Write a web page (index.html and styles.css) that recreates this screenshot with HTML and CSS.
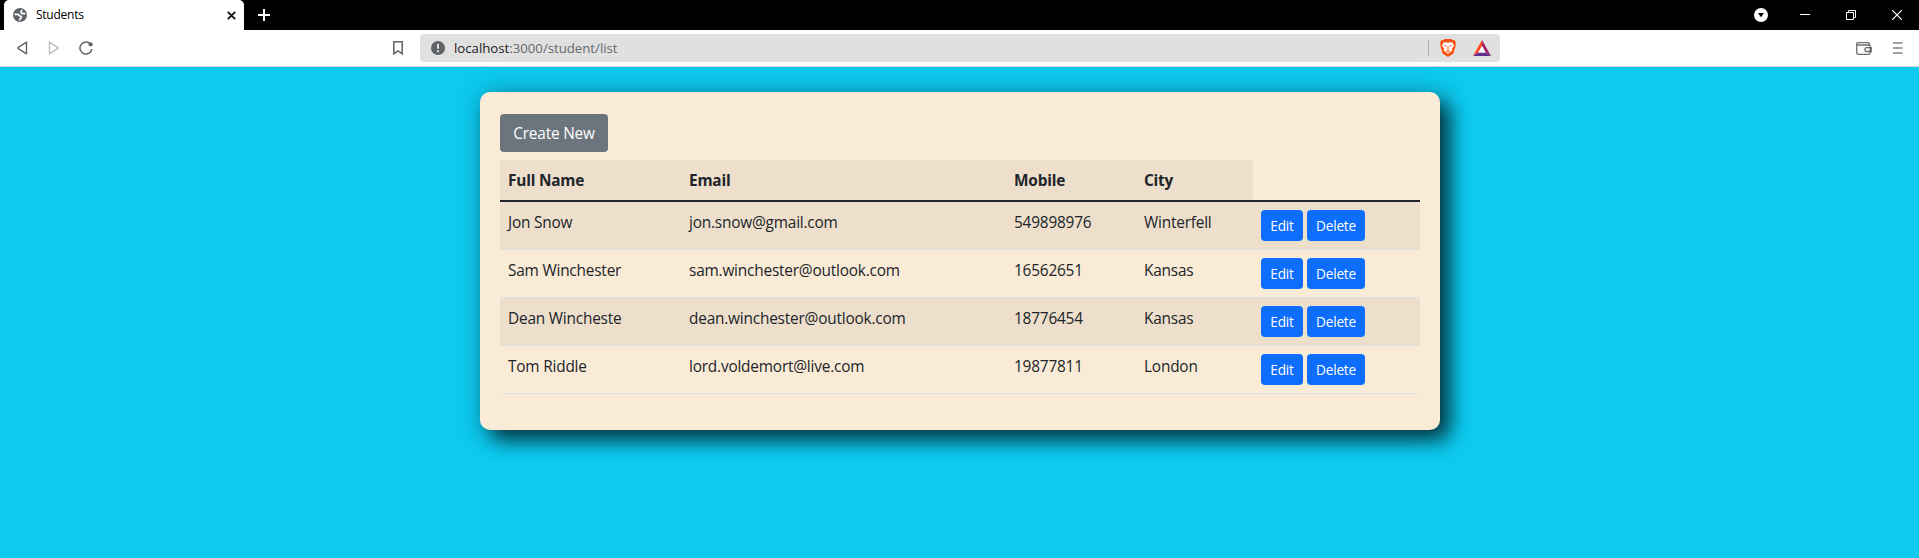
FILE: index.html
```html
<!DOCTYPE html>
<html lang="en">
<head>
<meta charset="utf-8">
<title>Students</title>
<link rel="stylesheet" href="styles.css">
</head>
<body>
<header class="browser">
  <div class="tabbar">
    <div class="tab">
      <svg class="tab-icon" width="14" height="14" viewBox="0 0 14 14"><circle cx="7" cy="7" r="7" fill="#5f6368"/><path d="M12.300 5.600H10c-1.200 0-1.900-.6-1.900-1.500S8.600 2.900 9 1.800M1.500 6.300h3.300c1.300 0 1.400 1.900 2.600 1.900 1.400 0 1.400 1.800.2 2.200-.9.300-.9 1-.9 2" fill="none" stroke="#fff" stroke-width="1.700"/></svg>
      <span class="tab-title">Students</span>
      <svg class="tab-close" width="9" height="9" viewBox="0 0 9 9"><path d="M.8.8l7.400 7.400M8.200.8L.8 8.200" stroke="#111" stroke-width="1.800"/></svg>
    </div>
    <svg class="new-tab" width="12" height="12" viewBox="0 0 12 12"><path d="M6 0v12M0 6h12" stroke="#fff" stroke-width="2"/></svg>
    <div class="window-controls">
      <svg width="14" height="14" viewBox="0 0 14 14"><circle cx="7" cy="7" r="7" fill="#fff"/><path d="M4 5h6L7 9.300z" fill="#000"/></svg>
      <svg width="10" height="10" viewBox="0 0 10 10"><path d="M0 4.500h10" stroke="#fff"/></svg>
      <svg width="10" height="10" viewBox="0 0 10 10"><path d="M.5 2.500h7v7h-7zM2.500 2.500v-2h7v7h-2" fill="none" stroke="#fff"/></svg>
      <svg width="10" height="10" viewBox="0 0 10 10"><path d="M0 0l10 10M10 0L0 10" stroke="#fff" stroke-width="1.200"/></svg>
    </div>
  </div>
  <div class="toolbar">
    <div class="nav">
      <svg width="12" height="14" viewBox="0 0 12 14"><path d="M9.500 1.200v11.600L1.300 7.600a.7.7 0 0 1 0-1.200z" fill="none" stroke="#5f6368" stroke-width="1.400" stroke-linejoin="round"/></svg>
      <svg width="12" height="14" viewBox="0 0 12 14"><path d="M1.500 1.200v11.600l8.200-5.200a.7.7 0 0 0 0-1.200z" fill="none" stroke="#b8babc" stroke-width="1.400" stroke-linejoin="round"/></svg>
      <svg width="14" height="14" viewBox="0 0 14 14"><path d="M10.600 2.300A6 6 0 1 0 12.900 8" fill="none" stroke="#5f6368" stroke-width="1.500"/><circle cx="11.600" cy="3.300" r="2.100" fill="#5f6368"/></svg>
    </div>
    <svg class="bookmark" width="10" height="14" viewBox="0 0 10 14"><path d="M.8.8h8.400v12L5 9.800l-4.200 3z" fill="none" stroke="#5f6368" stroke-width="1.500"/></svg>
    <div class="address">
      <svg width="14" height="14" viewBox="0 0 14 14"><circle cx="7" cy="7" r="7" fill="#5f6368"/><path d="M7 2.800v5M7 9.300v2" stroke="#e0e0e0" stroke-width="2"/></svg>
      <span class="url"><span class="host">localhost</span>:3000/student/list</span>
      <span class="divider"></span>
      <svg class="brave" width="16" height="18" viewBox="0 0 16 18"><path d="M4.500 0h7l1.300 1.300L14.600 1 16 4l-.6 1.500.3.900-2.200 8L8 18l-5.500-3.600L.3 6.400l.3-.9L0 4l1.400-3 1.800.3z" fill="#fb5412"/><path d="M3 4l2.400-.8L8 3.700l2.600-.5L13 4l1 2.700-2 2.700.3 2.100L10 13l-2 2-2-2-2.300-1.500L4 9.400 2 6.700z" fill="#fff"/><path d="M4.300 6.400l2.300.7M11.700 6.400l-2.300.7M8 7v3M6.300 10.500L8 11.500l1.700-1M6.300 13L8 12l1.700 1" fill="none" stroke="#fb5412" stroke-width=".9"/></svg>
      <svg class="bat" width="18" height="16" viewBox="0 0 18 16"><path d="M9 0L0 16l5.300-3.400L9 6z" fill="#ff4724"/><path d="M9 0l9 16-5.300-3.400L9 6z" fill="#9e1f63"/><path d="M0 16h18l-5.300-3.400H5.300z" fill="#662d91"/><path d="M9 6l3.700 6.600H5.300z" fill="#fff"/></svg>
    </div>
    <div class="toolbar-end">
      <svg width="16" height="13" viewBox="0 0 16 13"><path d="M13.300 4V1.700a1 1 0 0 0-1-1H1.700a1 1 0 0 0-1 1v9a1.600 1.600 0 0 0 1.600 1.600h10.300a1.600 1.600 0 0 0 1.600-1.600V4.300a1.300 1.300 0 0 0-1.300-1.300H.7M15.300 5.700h-4.500a1.900 1.900 0 0 0 0 3.800h4.500z" fill="none" stroke="#6b6e72" stroke-width="1.300"/></svg>
      <svg width="10" height="12" viewBox="0 0 10 12"><path d="M0 1h9.500M0 6h9.500M0 11h9.500" stroke="#808285" stroke-width="1.700"/></svg>
    </div>
  </div>
</header>
<main class="card">
  <a class="btn btn-create">Create New</a>
  <table class="students">
    <colgroup><col class="c-name"><col class="c-email"><col class="c-mobile"><col class="c-city"><col></colgroup>
    <thead><tr><th>Full Name</th><th>Email</th><th>Mobile</th><th>City</th><td class="blank"></td></tr></thead>
    <tbody>
      <tr><td>Jon Snow</td><td>jon.snow@gmail.com</td><td>549898976</td><td>Winterfell</td><td class="action-cell"><div class="actions"><a class="btn btn-sm edit">Edit</a><a class="btn btn-sm delete">Delete</a></div></td></tr>
      <tr><td>Sam Winchester</td><td>sam.winchester@outlook.com</td><td>16562651</td><td>Kansas</td><td class="action-cell"><div class="actions"><a class="btn btn-sm edit">Edit</a><a class="btn btn-sm delete">Delete</a></div></td></tr>
      <tr><td>Dean Wincheste</td><td>dean.winchester@outlook.com</td><td>18776454</td><td>Kansas</td><td class="action-cell"><div class="actions"><a class="btn btn-sm edit">Edit</a><a class="btn btn-sm delete">Delete</a></div></td></tr>
      <tr><td>Tom Riddle</td><td>lord.voldemort@live.com</td><td>19877811</td><td>London</td><td class="action-cell"><div class="actions"><a class="btn btn-sm edit">Edit</a><a class="btn btn-sm delete">Delete</a></div></td></tr>
    </tbody>
  </table>
</main>
</body>
</html>
```

FILE: styles.css
```css
* { box-sizing: border-box; }
body {
  margin: 0;
  height: 558px;
  overflow: hidden;
  background: #0dcaf0;
  color: #212529;
  font-family: "Segoe UI", "Open Sans", "Noto Sans", sans-serif;
  font-size: 15.4px;
  line-height: 24px;
}
svg { display: block; flex: none; }
.tabbar { display: flex; align-items: center; height: 30px; background: #000; }
.tab {
  display: flex; align-items: center;
  width: 240px; height: 30px; margin-left: 4px; padding: 0 8px 0 9px;
  background: #fff; border-radius: 5px 5px 0 0;
}
.tab-title { margin-left: 9px; font-size: 12px; color: #000; letter-spacing: -0.25px; }
.tab-close { margin-left: auto; }
.new-tab { margin-left: 14px; }
.window-controls { display: flex; align-items: center; margin-left: auto; padding-right: 17px; }
.window-controls svg:nth-child(2) { margin-left: 32px; }
.window-controls svg:nth-child(3), .window-controls svg:nth-child(4) { margin-left: 36px; }
.toolbar {
  display: flex; align-items: center;
  height: 37px; background: #fff; border-bottom: 1px solid #d4d4d4;
}
.nav { display: flex; gap: 19px; width: 393px; padding-left: 17px; }
.address {
  display: flex; align-items: center;
  width: 1080px; height: 28px; margin-left: 17px; padding: 0 9px 0 11px;
  background: #e0e0e0; border-radius: 4px;
}
.url { margin-left: 9px; font-size: 13.2px; color: #66696d; }
.host { color: #202124; }
.divider { width: 1px; height: 16px; margin-left: auto; background: #aaa; }
.brave { margin-left: 11px; }
.bat { margin-left: 17px; }
.toolbar-end { display: flex; align-items: center; gap: 21px; margin-left: auto; padding-right: 16px; }
.card {
  width: 960px; height: 338px; margin: 25px 0 0 480px; padding: 22px 20px;
  letter-spacing: -0.2px;
  background: #faebd7; border-radius: 10px;
  box-shadow: 10px 10px 20px rgba(0, 0, 0, .7), 0 0 30px rgba(0, 0, 0, .2);
}
.btn { display: block; color: #fff; text-align: center; border-radius: 4px; }
.btn-create { width: 108px; height: 38px; padding: 8px 0 6px; background: #6c757d; }
.students { width: 920px; margin-top: 8px; border-collapse: separate; border-spacing: 0; table-layout: fixed; }
.c-name { width: 181px; }
.c-email { width: 325px; }
.c-mobile { width: 130px; }
.c-city { width: 117px; }
th, td { padding: 9px 8px 7px; text-align: left; vertical-align: top; white-space: nowrap; }
th { height: 42px; font-weight: 700; background: #eddfcc; border-bottom: 2px solid #212529; }
.blank { border-bottom: 2px solid #212529; }
tbody td { height: 48px; border-bottom: 1px solid #dee2e6; }
tbody tr:nth-child(odd) td { background: #eddfcc; }
.action-cell { padding: 8px; }
.actions { display: flex; gap: 4px; }
.btn-sm { height: 31px; padding: 5px 0; font-size: 13.6px; line-height: 21px; background: #0d6efd; }
.edit { width: 42px; }
.delete { width: 58px; }
```
